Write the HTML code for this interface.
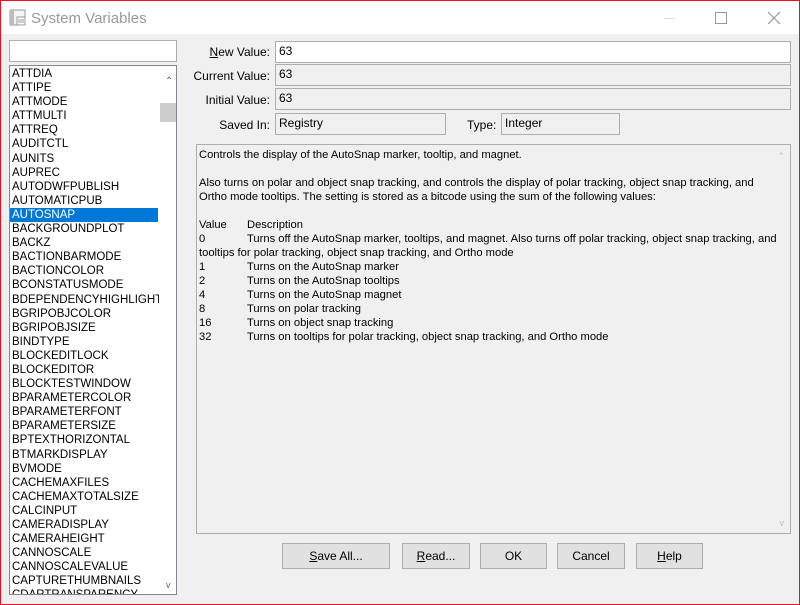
<!DOCTYPE html>
<html><head><style>
*{margin:0;padding:0;box-sizing:border-box}
body{width:800px;height:605px;overflow:hidden;background:#f0f0f0;font-family:"Liberation Sans",Arial,sans-serif;font-size:12px;color:#000;position:relative}
.win{position:absolute;left:0;top:0;width:800px;height:605px;border:1px solid #e81123}
.title{position:absolute;left:1px;top:1px;width:798px;height:33px;background:#fff}
.abs{position:absolute}
.box{position:absolute;border:1px solid #adadad;background:#f0f0f0;padding:2px 3px;font-size:12px;line-height:14px}
.lbl{position:absolute;text-align:right;width:120px;line-height:14px}
.list{position:absolute;left:9px;top:65px;width:168px;height:530px;border:1px solid #828790;background:#fff;overflow:hidden;padding-top:1px}
.list div{height:14.1px;line-height:15px;padding-left:2px;font-size:11.5px;white-space:nowrap}
.sel{background:#0078d7;color:#fff;width:148px}
.btn{position:absolute;top:543px;height:26px;border:1px solid #adadad;background:#e1e1e1;text-align:center;line-height:24px;font-size:12px}
.desc{position:absolute;left:196px;top:144px;width:595px;height:390px;border:1px solid #adadad;background:#f0f0f0;padding:3px 2px;line-height:14px;font-size:11.2px;white-space:nowrap}
.c2{position:absolute;left:48px}
.r{position:relative;height:14px}
</style></head><body>
<div class="title">
<svg class="abs" style="left:8px;top:8px" width="18" height="18" viewBox="0 0 18 18"><rect x="1" y="1" width="15" height="15" fill="#f4f4f4" stroke="#9a9a9a"/><rect x="1" y="1" width="4" height="15" fill="#bdbdbd"/><rect x="8" y="8" width="8" height="8" fill="#fff" stroke="#9a9a9a"/><line x1="9" y1="11" x2="15" y2="11" stroke="#9a9a9a"/><line x1="9" y1="13" x2="15" y2="13" stroke="#9a9a9a"/></svg>
<div class="abs" style="left:30px;top:9px;font-size:15px;color:#999">System Variables</div>
<div class="abs" style="left:663px;top:17px;width:11px;height:1px;background:#ddd"></div>
<div class="abs" style="left:714px;top:11px;width:12px;height:12px;border:1px solid #999"></div>
<svg class="abs" style="left:766px;top:10px" width="14" height="14"><path d="M1 1L13 13M13 1L1 13" stroke="#999" stroke-width="1.2"/></svg>
</div>
<div class="win"></div>
<div class="abs" style="left:9px;top:40px;width:168px;height:22px;border:1px solid #adadad;background:#fff"></div>
<div class="list">
<div>ATTDIA</div><div>ATTIPE</div><div>ATTMODE</div><div>ATTMULTI</div><div>ATTREQ</div><div>AUDITCTL</div><div>AUNITS</div><div>AUPREC</div><div>AUTODWFPUBLISH</div><div>AUTOMATICPUB</div><div class="sel">AUTOSNAP</div><div>BACKGROUNDPLOT</div><div>BACKZ</div><div>BACTIONBARMODE</div><div>BACTIONCOLOR</div><div>BCONSTATUSMODE</div><div>BDEPENDENCYHIGHLIGHT</div><div>BGRIPOBJCOLOR</div><div>BGRIPOBJSIZE</div><div>BINDTYPE</div><div>BLOCKEDITLOCK</div><div>BLOCKEDITOR</div><div>BLOCKTESTWINDOW</div><div>BPARAMETERCOLOR</div><div>BPARAMETERFONT</div><div>BPARAMETERSIZE</div><div>BPTEXTHORIZONTAL</div><div>BTMARKDISPLAY</div><div>BVMODE</div><div>CACHEMAXFILES</div><div>CACHEMAXTOTALSIZE</div><div>CALCINPUT</div><div>CAMERADISPLAY</div><div>CAMERAHEIGHT</div><div>CANNOSCALE</div><div>CANNOSCALEVALUE</div><div>CAPTURETHUMBNAILS</div><div>CDARTRANSPARENCY</div>
<div class="abs" style="left:149px;top:0;width:18px;height:528px;background:#fff"></div>
<div class="abs" style="left:150px;top:37px;width:17px;height:19px;background:#cdcdcd"></div>
<div class="abs" style="left:153px;top:8px;font-size:10px;color:#606060">&#8963;</div>
<div class="abs" style="left:154px;top:512px;font-size:9px;color:#606060">v</div>
</div>
<div class="lbl" style="left:150px;top:45px"><u>N</u>ew Value:</div>
<div class="lbl" style="left:150px;top:69px">Current Value:</div>
<div class="lbl" style="left:150px;top:93px">Initial Value:</div>
<div class="lbl" style="left:150px;top:118px">Saved In:</div>
<div class="abs" style="left:467px;top:118px">Type:</div>
<div class="box" style="left:275px;top:41px;width:516px;height:22px;background:#fff">63</div>
<div class="box" style="left:275px;top:64px;width:516px;height:22px">63</div>
<div class="box" style="left:275px;top:88px;width:516px;height:22px">63</div>
<div class="box" style="left:275px;top:113px;width:171px;height:22px">Registry</div>
<div class="box" style="left:501px;top:113px;width:119px;height:22px">Integer</div>
<div class="desc">
<div class="r">Controls the display of the AutoSnap marker, tooltip, and magnet.</div>
<div class="r"></div>
<div class="r">Also turns on polar and object snap tracking, and controls the display of polar tracking, object snap tracking, and</div>
<div class="r">Ortho mode tooltips. The setting is stored as a bitcode using the sum of the following values:</div>
<div class="r"></div>
<div class="r">Value<span class="c2">Description</span></div>
<div class="r">0<span class="c2">Turns off the AutoSnap marker, tooltips, and magnet. Also turns off polar tracking, object snap tracking, and</span></div>
<div class="r">tooltips for polar tracking, object snap tracking, and Ortho mode</div>
<div class="r">1<span class="c2">Turns on the AutoSnap marker</span></div>
<div class="r">2<span class="c2">Turns on the AutoSnap tooltips</span></div>
<div class="r">4<span class="c2">Turns on the AutoSnap magnet</span></div>
<div class="r">8<span class="c2">Turns on polar tracking</span></div>
<div class="r">16<span class="c2">Turns on object snap tracking</span></div>
<div class="r">32<span class="c2">Turns on tooltips for polar tracking, object snap tracking, and Ortho mode</span></div>
<div class="abs" style="right:5px;top:4px;font-size:9px;color:#bbb">&#8963;</div>
<div class="abs" style="right:6px;bottom:3px;font-size:9px;color:#bbb">v</div>
</div>
<div class="btn" style="left:282px;width:108px"><u>S</u>ave All...</div>
<div class="btn" style="left:402px;width:68px"><u>R</u>ead...</div>
<div class="btn" style="left:480px;width:67px">OK</div>
<div class="btn" style="left:557px;width:68px">Cancel</div>
<div class="btn" style="left:636px;width:67px"><u>H</u>elp</div>
</body></html>
